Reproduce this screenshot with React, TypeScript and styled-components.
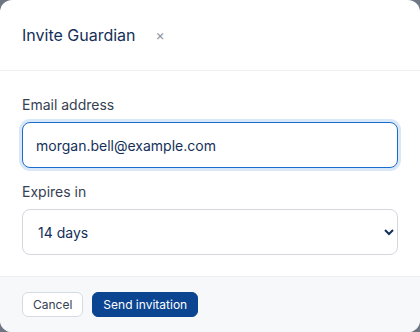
import styled, { createGlobalStyle } from 'styled-components'

const GlobalStyle = createGlobalStyle`
    html, body {
        margin: 0;
        padding: 0;
        background: #6f7683;
        font-family: Inter, "Noto Sans", "Liberation Sans", sans-serif;
    }
    * { box-sizing: border-box; }
`

const Dialog = styled.div`
    width: 420px;
    height: 332px;
    background: #ffffff;
    border-radius: 12px;
    overflow: hidden;
    display: flex;
    flex-direction: column;
`

const Header = styled.div`
    height: 71px;
    display: flex;
    align-items: center;
    gap: 20px;
    padding: 0 22px;
    border-bottom: 1px solid #eceef2;
`

const Title = styled.h2`
    margin: 0;
    font-size: 16px;
    font-weight: 400;
    color: #14305a;
`

const CloseButton = styled.button`
    border: none;
    background: none;
    padding: 0;
    font-size: 14px;
    line-height: 1;
    color: #8d94a0;
    cursor: pointer;
    font-family: inherit;
`

const Body = styled.div`
    flex: 1;
    padding: 25px 22px 0;
    display: flex;
    flex-direction: column;
`

const Field = styled.label`
    display: flex;
    flex-direction: column;
    gap: 9px;
    margin-bottom: 15px;
`

const Label = styled.span`
    font-size: 14px;
    color: #364152;
`

const Input = styled.input`
    height: 46px;
    width: 100%;
    border: 1px solid #1a6dcc;
    border-radius: 8px;
    box-shadow: 0 0 0 3px #d9e8f8;
    padding: 0 13px;
    font-size: 14px;
    font-family: inherit;
    color: #14305a;
    outline: none;
`

const Select = styled.select`
    height: 46px;
    width: 100%;
    border: 1px solid #d4d7de;
    border-radius: 8px;
    padding: 0 11px;
    font-size: 14px;
    font-family: inherit;
    color: #14305a;
    background: #fff;
    outline: none;
`

const Footer = styled.div`
    height: 56px;
    background: #f7f8fa;
    border-top: 1px solid #eceef2;
    display: flex;
    align-items: center;
    gap: 9px;
    padding: 0 22px;
`

const Button = styled.button<{ $primary?: boolean }>`
    height: 25px;
    padding: 0 10px;
    border-radius: 6px;
    font-size: 12px;
    font-family: inherit;
    cursor: pointer;
    border: 1px solid ${p => (p.$primary ? '#0b4490' : '#d6dae2')};
    background: ${p => (p.$primary ? '#0b4490' : '#ffffff')};
    color: ${p => (p.$primary ? '#ffffff' : '#364152')};
`

const App = () => {
    return <>
        <GlobalStyle />
        <Dialog>
            <Header>
                <Title>Invite Guardian</Title>
                <CloseButton>×</CloseButton>
            </Header>
            <Body>
                <Field>
                    <Label>Email address</Label>
                    <Input defaultValue="morgan.bell@example.com" />
                </Field>
                <Field>
                    <Label>Expires in</Label>
                    <Select defaultValue="14">
                        <option value="7">7 days</option>
                        <option value="14">14 days</option>
                        <option value="30">30 days</option>
                    </Select>
                </Field>
            </Body>
            <Footer>
                <Button>Cancel</Button>
                <Button $primary>Send invitation</Button>
            </Footer>
        </Dialog>
    </>
}

export default App
